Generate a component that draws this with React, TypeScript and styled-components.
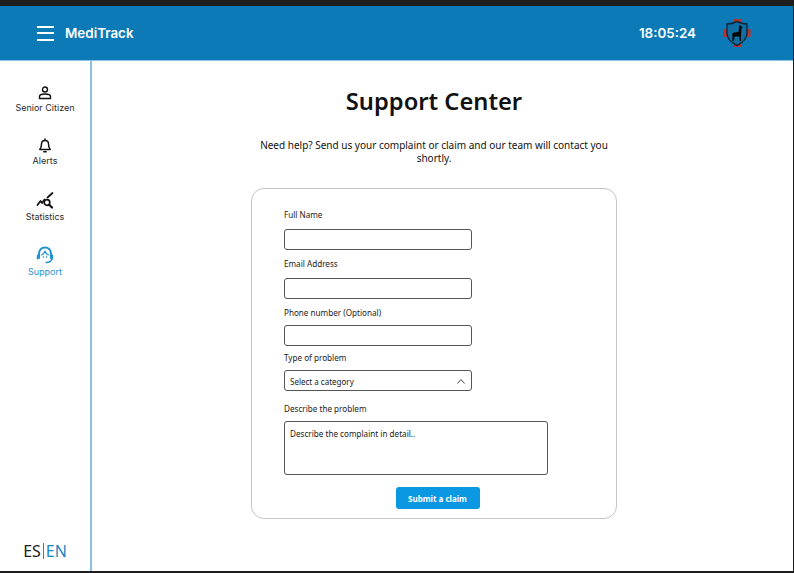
import React from "react";
import styled, { createGlobalStyle } from "styled-components";

const Global = createGlobalStyle`
  html, body { margin: 0; padding: 0; background: #fff; }
  #root { width: 794px; height: 573px; overflow: hidden; }
  * { box-sizing: border-box; }
`;

const Frame = styled.div`
  width: 794px;
  height: 573px;
  display: flex;
  flex-direction: column;
  background: #fff;
  border-top: 6px solid #1e1e1e;
  border-bottom: 2px solid #1e1e1e;
  border-right: 1px solid #1e1e1e;
`;

const Header = styled.header`
  height: 55px;
  flex: none;
  display: flex;
  align-items: center;
  background: #0b7ab6;
  border-bottom: 1px solid #8cc3e2;
  padding: 0 42px 0 37px;
  color: #fff;
  font-family: Inter, sans-serif;
`;

const Burger = styled.div`
  width: 17px;
  height: 15px;
  display: flex;
  flex-direction: column;
  justify-content: space-between;
  span { display: block; height: 2px; background: #fff; }
`;

const Brand = styled.div`
  margin-left: 11px;
  font-size: 13.4px;
  font-weight: 600;
  flex: 1;
`;

const Clock = styled.div`
  font-size: 13.4px;
  font-weight: 600;
  margin-right: 27px;
`;

const Body = styled.div`
  flex: 1;
  display: flex;
  min-height: 0;
`;

const Side = styled.nav`
  width: 92px;
  flex: none;
  border-right: 2px solid #8cc0e0;
  display: flex;
  flex-direction: column;
  align-items: center;
  padding-top: 25px;
  font-family: Inter, sans-serif;
`;

const Item = styled.div<{ $active?: boolean; $h: number }>`
  height: ${(p) => p.$h}px;
  display: flex;
  flex-direction: column;
  align-items: center;
  font-size: 9px;
  line-height: 11px;
  color: ${(p) => (p.$active ? "#1f93d2" : "#2a2a2a")};
  svg { display: block; margin-bottom: 2px; }
`;

const Lang = styled.div`
  margin-top: auto;
  margin-bottom: 12px;
  font-family: "Noto Sans", sans-serif;
  font-size: 16px;
  line-height: 16px;
  color: #222;
  display: flex;
  span { color: #1b86c2; border-left: 1px solid #1b86c2; margin-left: 2px; padding-left: 2px; }
`;

const Main = styled.main`
  flex: 1;
  display: flex;
  flex-direction: column;
  align-items: center;
  padding: 25px 17px 0 0;
  font-family: "Noto Sans", sans-serif;
  color: #111;
`;

const Title = styled.h1`
  margin: 0;
  font-size: 23.7px;
  line-height: 30px;
  font-weight: 600;
`;

const Lead = styled.p`
  width: 366px;
  margin: 23px 0 0;
  font-size: 10px;
  line-height: 13px;
  text-align: center;
`;

const Card = styled.form`
  width: 366px;
  height: 331px;
  margin-top: 23px;
  border: 1px solid #c4c4c4;
  border-radius: 13px;
  padding: 20px 32px 0;
  display: flex;
  flex-direction: column;
  align-items: flex-start;
`;

const Label = styled.div<{ $mt?: number; $mb: number }>`
  font-size: 8.15px;
  line-height: 12px;
  margin-top: ${(p) => p.$mt ?? 0}px;
  margin-bottom: ${(p) => p.$mb}px;
  color: #222;
`;

const Field = styled.div<{ $w?: number; $h?: number }>`
  width: ${(p) => p.$w ?? 188}px;
  height: ${(p) => p.$h ?? 21}px;
  border: 1px solid #555;
  border-radius: 3px;
  background: #fff;
`;

const Select = styled(Field)`
  display: flex;
  align-items: center;
  justify-content: space-between;
  padding: 1px 5px 0;
  font-size: 8px;
  color: #222;
`;

const Area = styled(Field)`
  padding: 6px 5px;
  font-size: 8.15px;
  line-height: 12px;
  color: #222;
`;

const Submit = styled.div`
  align-self: center;
  margin: 12px 0 0 7px;
  width: 84px;
  height: 22px;
  background: #0a98e2;
  border-radius: 3px;
  color: #fff;
  font-size: 8px;
  font-weight: 700;
  display: flex;
  align-items: center;
  justify-content: center;
`;

const ic = { fill: "none", stroke: "currentColor", strokeLinecap: "round" as const, strokeLinejoin: "round" as const };

const App = () => (
  <>
    <Global />
    <Frame>
      <Header>
        <Burger><span /><span /><span /></Burger>
        <Brand>MediTrack</Brand>
        <Clock>18:05:24</Clock>
        <svg width="28" height="32" viewBox="0 0 28 32">
          <g fill="#b8322e">
            <rect x="10" y="2" width="8" height="3" />
            <rect x="10" y="27" width="8" height="3" />
            <rect x="0.500" y="12" width="3.500" height="8" />
            <rect x="24" y="12" width="3.500" height="8" />
          </g>
          <path d="M14 4.500 C17 6 20.500 7 24 7 V16 C24 22 19 26 14 28.500 C9 26 4 22 4 16 V7 C7.500 7 11 6 14 4.500Z" fill="#0f6ea3" stroke="#10283c" strokeWidth="1.400" />
          <path d="M16.500 8 L19.500 10 L18.500 11.500 L18 17 L18 24 H16.500 V19.500 H11.500 L11 24 H9.500 L9.300 16.500 C10 15 12.500 15.500 15.500 15 L16 11 Z" fill="#050505" />
        </svg>
      </Header>
      <Body>
        <Side>
          <Item $h={52}>
            <svg width="14" height="14" viewBox="0 0 14 14" {...ic} stroke="#111" strokeWidth="1.400">
              <circle cx="7" cy="3.500" r="2.500" />
              <path d="M1.500 12.500 V10.500 C1.500 9 3 8 7 8 C11 8 12.500 9 12.500 10.500 V12.500 Z" />
            </svg>
            Senior Citizen
          </Item>
          <Item $h={54}>
            <svg width="14" height="15" viewBox="0 0 14 15" {...ic} stroke="#111" strokeWidth="1.500">
              <path d="M7 2.500 C4.500 2.500 3.500 4 3.500 6 C3.500 8.500 3 10 1.800 11.500 H12.200 C11 10 10.500 8.500 10.500 6 C10.500 4 9.500 2.500 7 2.500Z" />
              <path d="M7 1 V2.500 M5.800 13.800 H8.200" />
            </svg>
            Alerts
          </Item>
          <Item $h={54}>
            <svg width="18" height="17" viewBox="0 0 18 17" {...ic} stroke="#111" strokeWidth="1.700">
              <path d="M1.500 13 L4.500 9 L6 11 L8.500 7.500" />
              <path d="M11.500 5.500 L16.500 1" />
              <circle cx="11" cy="10.500" r="2.800" />
              <path d="M13.200 12.800 L16 15.500" strokeWidth="2.200" />
            </svg>
            Statistics
          </Item>
          <Item $h={50} $active>
            <svg width="18" height="18" viewBox="0 0 18 18" {...ic} stroke="#1f93d2" strokeWidth="1.500">
              <path d="M3 12 V8 C3 4 5.500 1.500 9 1.500 C12.500 1.500 15 4 15 8 V12" strokeWidth="2" />
              <path d="M5.500 9 C7 8.500 8.500 7 9 5 C9.500 7 11 8.500 12.500 9" strokeWidth="1.100" />
              <path d="M1.800 9.500 V12.500 M16.200 9.500 V12.500" strokeWidth="2" />
              <path d="M15.800 13 C15.200 15.500 13 16.500 10 16.500" strokeWidth="1.300" />
              <path d="M7.300 11 H7.500 M10.500 11 H10.700" strokeWidth="1.300" />
            </svg>
            Support
          </Item>
          <Lang>ES<span>EN</span></Lang>
        </Side>
        <Main>
          <Title>Support Center</Title>
          <Lead>Need help? Send us your complaint or claim and our team will contact you shortly.</Lead>
          <Card>
            <Label $mb={8}>Full Name</Label>
            <Field />
            <Label $mt={8} $mb={8}>Email Address</Label>
            <Field />
            <Label $mt={8} $mb={6}>Phone number (Optional)</Label>
            <Field />
            <Label $mt={6} $mb={6}>Type of problem</Label>
            <Select>
              Select a category
              <svg width="10" height="6" viewBox="0 0 10 6" fill="none" stroke="#333" strokeWidth="0.900"><path d="M1.500 5.500 L5 1.500 L8.500 5.500" /></svg>
            </Select>
            <Label $mt={12} $mb={6}>Describe the problem</Label>
            <Area $w={264} $h={54}>Describe the complaint in detail..</Area>
            <Submit>Submit a claim</Submit>
          </Card>
        </Main>
      </Body>
    </Frame>
  </>
);

export default App;
